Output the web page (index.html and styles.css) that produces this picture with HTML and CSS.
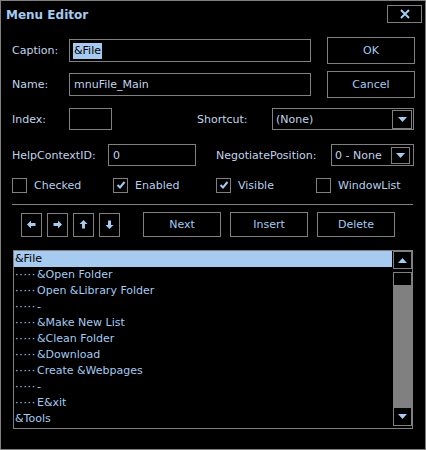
FILE: index.html
```html
<!DOCTYPE html>
<html lang="en">
<head>
<meta charset="UTF-8">
<title>Menu Editor</title>
<link rel="stylesheet" href="styles.css">
</head>
<body>

<div class="dialog">
  <div class="titlebar">
    <span class="title">Menu Editor</span>
    <button class="close">
      <svg width="10" height="10" viewBox="0 0 10 10"><path d="M1 1 L9 9 M9 1 L1 9" stroke="#a6caf0" stroke-width="2"/></svg>
    </button>
  </div>

  <div class="content">
    <div class="row row-caption">
      <label class="lbl w-57">Caption:</label>
      <div class="field w-242"><span class="sel">&amp;File</span></div>
      <button class="btn btn-side">OK</button>
    </div>

    <div class="row row-name">
      <label class="lbl w-57">Name:</label>
      <div class="field w-242">mnuFile_Main</div>
      <button class="btn btn-side">Cancel</button>
    </div>

    <div class="row row-index">
      <label class="lbl w-57">Index:</label>
      <div class="field w-43"></div>
      <label class="lbl lbl-shortcut">Shortcut:</label>
      <div class="combo w-142">
        <span>(None)</span>
        <span class="drop"><svg width="9" height="5" viewBox="0 0 9 5"><path d="M0 0 H9 L4.5 5 Z" fill="#a6caf0"/></svg></span>
      </div>
    </div>

    <div class="row row-help">
      <label class="lbl w-96">HelpContextID:</label>
      <div class="field w-88">0</div>
      <label class="lbl lbl-negotiate">NegotiatePosition:</label>
      <div class="combo w-83">
        <span>0 - None</span>
        <span class="drop"><svg width="9" height="5" viewBox="0 0 9 5"><path d="M0 0 H9 L4.5 5 Z" fill="#a6caf0"/></svg></span>
      </div>
    </div>

    <div class="row row-checks">
      <div class="check w-101"><span class="box"></span>Checked</div>
      <div class="check w-103"><span class="box"><svg width="12" height="12" viewBox="0 0 12 12"><path d="M2.5 6 L5 8.5 L9.5 3" fill="none" stroke="#a6caf0" stroke-width="2"/></svg></span>Enabled</div>
      <div class="check w-100"><span class="box"><svg width="12" height="12" viewBox="0 0 12 12"><path d="M2.5 6 L5 8.5 L9.5 3" fill="none" stroke="#a6caf0" stroke-width="2"/></svg></span>Visible</div>
      <div class="check"><span class="box"></span>WindowList</div>
    </div>

    <div class="separator"></div>

    <div class="row row-buttons">
      <div class="arrows">
        <button class="arrow"><svg width="9" height="9" viewBox="0 0 9 9"><path d="M0 4.5 L4 0.5 V3 H8.5 V6 H4 V8.5 Z" fill="#a6caf0"/></svg></button>
        <button class="arrow"><svg width="9" height="9" viewBox="0 0 9 9"><path d="M9 4.5 L5 0.5 V3 H0.5 V6 H5 V8.5 Z" fill="#a6caf0"/></svg></button>
        <button class="arrow"><svg width="9" height="9" viewBox="0 0 9 9"><path d="M4.5 0 L0.5 4 H3 V8.5 H6 V4 H8.5 Z" fill="#a6caf0"/></svg></button>
        <button class="arrow"><svg width="9" height="9" viewBox="0 0 9 9"><path d="M4.5 9 L0.5 5 H3 V0.5 H6 V5 H8.5 Z" fill="#a6caf0"/></svg></button>
      </div>
      <button class="btn btn-action">Next</button>
      <button class="btn btn-action">Insert</button>
      <button class="btn btn-action">Delete</button>
    </div>

    <div class="listbox">
      <ul class="items">
        <li class="selected">&amp;File</li>
        <li><span class="dots">·····</span>&amp;Open Folder</li>
        <li><span class="dots">·····</span>Open &amp;Library Folder</li>
        <li><span class="dots">·····</span>-</li>
        <li><span class="dots">·····</span>&amp;Make New List</li>
        <li><span class="dots">·····</span>&amp;Clean Folder</li>
        <li><span class="dots">·····</span>&amp;Download</li>
        <li><span class="dots">·····</span>Create &amp;Webpages</li>
        <li><span class="dots">·····</span>-</li>
        <li><span class="dots">·····</span>E&amp;xit</li>
        <li>&amp;Tools</li>
      </ul>
      <div class="scrollbar">
        <span class="sbtn"><svg width="9" height="5" viewBox="0 0 9 5"><path d="M0 5 H9 L4.5 0 Z" fill="#a6caf0"/></svg></span>
        <span class="thumb"></span>
        <span class="track"></span>
        <span class="sbtn sbtn-down"><svg width="9" height="5" viewBox="0 0 9 5"><path d="M0 0 H9 L4.5 5 Z" fill="#a6caf0"/></svg></span>
      </div>
    </div>
  </div>
</div>

</body>
</html>
```

FILE: styles.css
```css
/* High contrast dialog */
body {
  margin: 0;
  background-color: #000;
  font-family: "DejaVu Sans", Verdana, sans-serif;
  font-size: 11px;
}
.dialog {
  width: 426px;
  height: 450px;
  box-sizing: border-box;
  border: 1px solid #808080;
  background-color: #000;
  color: #c2d3ec;
}
.titlebar {
  display: flex;
  align-items: center;
  justify-content: space-between;
  height: 28px;
  padding: 0 3px 0 5px;
}
.title {
  font-weight: bold;
  font-size: 12px;
  color: #a6caf0;
}
.close {
  width: 35px;
  height: 18px;
  margin-top: -2px;
  background: #000;
  border: 1px solid #808080;
  padding: 0;
  display: flex;
  align-items: center;
  justify-content: center;
}
.content {
  padding: 8px 11px 0 11px;
}
.row {
  display: flex;
  align-items: center;
}
.lbl {
  flex: none;
}
.w-57 { width: 57px; }
.w-96 { width: 96px; }
.w-242 { width: 242px; }
.w-43 { width: 43px; }
.w-88 { width: 88px; }
.w-142 { width: 142px; }
.w-83 { width: 83px; }
.w-101 { width: 101px; }
.w-103 { width: 103px; }
.w-100 { width: 100px; }

.field, .combo {
  flex: none;
  box-sizing: border-box;
  height: 22px;
  border: 1px solid #808080;
  display: flex;
  align-items: center;
  padding-left: 4px;
  color: #c2d3ec;
}
.row-caption .field, .row-name .field {
  height: 23px;
}
.sel {
  background-color: #a6caf0;
  color: #000;
  padding: 1px 1px 2px 1px;
  margin-left: -1px;
}
.combo {
  justify-content: space-between;
  padding: 0 1px 0 3px;
}
.drop {
  box-sizing: border-box;
  width: 20px;
  height: 19px;
  border: 1px solid #808080;
  display: flex;
  align-items: center;
  justify-content: center;
}
.w-83 .drop {
  height: 17px;
  width: 19px;
  margin-right: 2px;
}

.btn {
  flex: none;
  box-sizing: border-box;
  background: #000;
  border: 1px solid #808080;
  color: #a6caf0;
  font-family: "DejaVu Sans", Verdana, sans-serif;
  font-size: 11px;
  padding: 0;
}
.btn-side {
  width: 88px;
  height: 27px;
  margin-left: 16px;
}
.row-caption, .row-name { height: 27px; }
.row-name { margin-top: 7px; }
.row-index { height: 22px; margin-top: 10px; }
.lbl-shortcut { width: 75px; margin-left: 85px; }
.row-help { height: 22px; margin-top: 14px; }
.lbl-negotiate { width: 115px; margin-left: 20px; }

.row-checks { height: 16px; margin-top: 11px; }
.check {
  flex: none;
  display: flex;
  align-items: center;
  color: #b8cfee;
}
.box {
  box-sizing: border-box;
  width: 15px;
  height: 15px;
  border: 1px solid #808080;
  margin-right: 7px;
  display: flex;
  align-items: center;
  justify-content: center;
}

.separator {
  height: 1px;
  width: 401px;
  background-color: #808080;
  margin-top: 11px;
}

.row-buttons { height: 25px; margin-top: 7px; }
.arrows {
  display: flex;
  gap: 5px;
  margin-left: 9px;
  margin-right: 23px;
}
.arrow {
  box-sizing: border-box;
  width: 21px;
  height: 24px;
  background: #000;
  border: 1px solid #808080;
  padding: 0;
  display: flex;
  align-items: center;
  justify-content: center;
}
.btn-action {
  width: 78px;
  height: 25px;
  margin-right: 9px;
}

.listbox {
  box-sizing: border-box;
  display: flex;
  width: 400px;
  height: 179px;
  margin: 13px 0 0 1px;
  border: 1px solid #808080;
}
.items {
  list-style: none;
  margin: 0;
  padding: 0;
  width: 378px;
  overflow: hidden;
  color: #a6caf0;
}
.items li {
  height: 16px;
  line-height: 16px;
  padding-left: 1px;
  white-space: nowrap;
}
.items li.selected {
  background-color: #a6caf0;
  color: #000;
}
.dots {
  letter-spacing: 0.7px;
  margin-right: 1px;
}
.scrollbar {
  display: flex;
  flex-direction: column;
  width: 20px;
  padding-bottom: 2px;
  box-sizing: border-box;
}
.sbtn {
  box-sizing: border-box;
  height: 18px;
  width: 19px;
  margin-left: 1px;
  border: 1px solid #808080;
  display: flex;
  align-items: center;
  justify-content: center;
}
.sbtn-down { height: 19px; }
.thumb {
  box-sizing: border-box;
  height: 14px;
  width: 19px;
  margin: 3px 0 0 1px;
  border: 1px solid #808080;
}
.track {
  flex: 1;
  margin-left: 1px;
  background-color: #808080;
}
```
